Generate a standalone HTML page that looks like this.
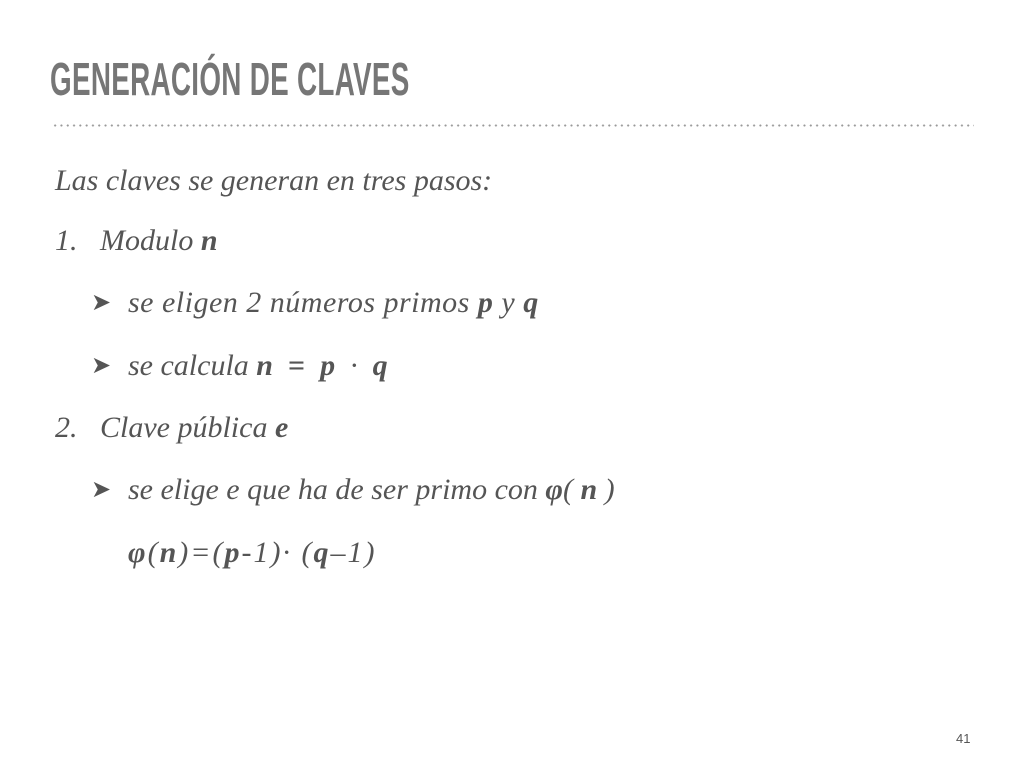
<!DOCTYPE html>
<html><head><meta charset="utf-8"><style>
body{margin:0;width:1024px;height:768px;background:#fff;position:relative;overflow:hidden;font-family:"Liberation Serif",serif;color:#555;}
.t{position:absolute;left:50px;top:52px;font-family:"Liberation Sans",sans-serif;font-weight:bold;font-size:46px;color:#767676;transform:scaleX(0.605);transform-origin:left top;white-space:nowrap;letter-spacing:0.5px}
.dots{position:absolute;left:52px;top:124px;width:922px;height:3px;background-image:radial-gradient(circle,#999 0.9px,transparent 1.2px);background-size:6.3px 3px;background-repeat:repeat-x}
.l{position:absolute;font-style:italic;font-size:30px;white-space:nowrap;line-height:1}
.ar{font-style:normal;font-family:"DejaVu Sans",sans-serif;font-size:24px;position:absolute;left:91px;color:#555}
.pg{position:absolute;left:956px;top:731px;font-family:"Liberation Sans",sans-serif;font-size:13px;color:#555}
</style></head><body>
<div class="t">GENERACIÓN DE CLAVES</div>
<div class="dots"></div>
<div class="l" style="left:55px;top:166px">Las claves se generan en tres pasos:</div>
<div class="l" style="left:55px;top:226px">1.&nbsp;&nbsp;&nbsp;Modulo <b>n</b></div>
<div class="ar" style="top:288px">➤</div>
<div class="l" style="left:128px;top:288px;letter-spacing:0.5px">se eligen 2 números primos <b>p</b> y <b>q</b></div>
<div class="ar" style="top:351px">➤</div>
<div class="l" style="left:128px;top:351px">se calcula <b>n</b> <b style="font-style:normal">&nbsp;=&nbsp;</b> <b>p</b> &nbsp;·&nbsp; <b>q</b></div>
<div class="l" style="left:55px;top:413px">2.&nbsp;&nbsp;&nbsp;Clave pública <b>e</b></div>
<div class="ar" style="top:475px">➤</div>
<div class="l" style="left:128px;top:475px">se elige e que ha de ser primo con <b>φ</b>( <b>n</b> )</div>
<div class="l" style="left:128px;top:538px;letter-spacing:2px"><b>φ</b>(<b>n</b>)=(<b>p</b>-1)· (<b>q</b>–1)</div>
<div class="pg">41</div>
</body></html>
